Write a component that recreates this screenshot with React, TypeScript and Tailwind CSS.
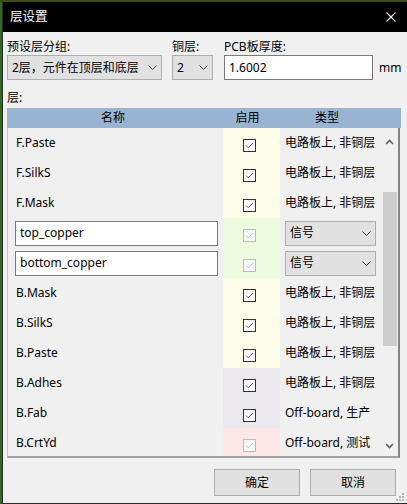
import React from "react";

type Row = {
  name: string;
  copper?: boolean;
  bg: string;
  type: string;
  locked?: boolean;
};

const rows: Row[] = [
  { name: "F.Paste", bg: "bg-[#fefdea]", type: "电路板上, 非铜层" },
  { name: "F.SilkS", bg: "bg-[#fefdea]", type: "电路板上, 非铜层" },
  { name: "F.Mask", bg: "bg-[#fefdea]", type: "电路板上, 非铜层" },
  { name: "top_copper", copper: true, bg: "bg-[#ecfadd]", type: "信号", locked: true },
  { name: "bottom_copper", copper: true, bg: "bg-[#ecfadd]", type: "信号", locked: true },
  { name: "B.Mask", bg: "bg-[#fefdea]", type: "电路板上, 非铜层" },
  { name: "B.SilkS", bg: "bg-[#fefdea]", type: "电路板上, 非铜层" },
  { name: "B.Paste", bg: "bg-[#fefdea]", type: "电路板上, 非铜层" },
  { name: "B.Adhes", bg: "bg-[#ebe9ed]", type: "电路板上, 非铜层" },
  { name: "B.Fab", bg: "bg-[#ebe9ed]", type: "Off-board, 生产" },
  { name: "B.CrtYd", bg: "bg-[#fde7e8]", type: "Off-board, 测试", locked: true },
];

const Chevron = () => (
  <svg width="9" height="5" viewBox="0 0 9 5" fill="none">
    <path d="M0.5 0.5 L4.5 4.5 L8.5 0.5" stroke="#404040" strokeWidth="1" />
  </svg>
);

const ScrollArrow = ({ down }: { down?: boolean }) => (
  <svg width="9" height="6" viewBox="0 0 9 6" fill="none">
    <path
      d={down ? "M1 1 L4.5 4.5 L8 1" : "M1 5 L4.5 1.5 L8 5"}
      stroke="#606060"
      strokeWidth="1.6"
    />
  </svg>
);

const Check = ({ locked }: { locked?: boolean }) => (
  <svg width="13" height="13" viewBox="0 0 13 13" fill="none">
    <rect
      x="0.5"
      y="0.5"
      width="12"
      height="12"
      fill={locked ? "#f8f8f8" : "#ffffff"}
      stroke={locked ? "#bcbcbc" : "#333333"}
    />
    <path
      d="M3 6.5 L5.3 8.8 L10 4"
      stroke={locked ? "#c4c4c4" : "#555555"}
      strokeWidth="1"
    />
  </svg>
);

const Combo = ({ text, className }: { text: string; className: string }) => (
  <div
    className={`flex items-center justify-between h-[25px] bg-[#e1e1e1] border border-[#adadad] pl-[4px] pr-[4px] ${className}`}
  >
    <span className="leading-none">{text}</span>
    <Chevron />
  </div>
);

export default function App() {
  return (
    <div className="w-[407px] h-[504px] overflow-hidden flex flex-col bg-[#1f3d16] text-[12px] text-black font-['Noto_Sans','Noto_Sans_CJK_SC',sans-serif]">
      <div className="h-[2px] bg-[#3c4a14]" />
      <div className="flex flex-1 min-h-0">
        <div className="w-[2px] bg-[#2f6a20]" />
        <div className="relative flex-1 flex flex-col bg-[#f0f0f0] border-l border-b border-[#2a2a2a]">
          {/* title bar */}
          <div className="h-[30px] bg-black flex items-center justify-between pl-[7px] pr-[11px] text-white">
            <span className="text-[12.5px]">层设置</span>
            <svg width="10" height="10" viewBox="0 0 10 10">
              <path d="M0.5 0.5 L9.5 9.5 M9.5 0.5 L0.5 9.5" stroke="#ffffff" strokeWidth="1.1" />
            </svg>
          </div>

          <div className="flex flex-col flex-1 pl-[4px] pt-[7px]">
            {/* top controls */}
            <div className="flex items-end">
              <div className="flex flex-col w-[155px] gap-[1px]">
                <span className="h-[15px] leading-[15px]">预设层分组:</span>
                <Combo text="2层，元件在顶层和底层" className="w-[155px]" />
              </div>
              <div className="flex flex-col w-[41px] ml-[10px] gap-[1px]">
                <span className="h-[15px] leading-[15px]">铜层:</span>
                <Combo text="2" className="w-[41px]" />
              </div>
              <div className="flex flex-col w-[149px] ml-[11px] gap-[1px]">
                <span className="h-[15px] leading-[15px]">PCB板厚度:</span>
                <div className="h-[25px] bg-white border border-[#7a7a7a] flex items-center pl-[4px]">
                  1.6002
                </div>
              </div>
              <span className="ml-[6px] h-[25px] leading-[25px]">mm</span>
            </div>

            <span className="mt-[10px] h-[15px] leading-[15px]">层:</span>

            {/* header */}
            <div className="mt-[3px] w-[394px] h-[20px] bg-[#99b4d1] flex items-center">
              <span className="w-[212px] text-center">名称</span>
              <span className="w-[57px] text-center">启用</span>
              <span className="w-[102px] text-center">类型</span>
            </div>

            {/* body */}
            <div className="w-[393px] h-[330px] flex border-l border-[#c8c8c8] border-r-2 border-b-2 border-r-[#838383] border-b-[#a0a0a0]">
              <div className="w-[373px] h-[328px] overflow-hidden flex flex-col">
                {rows.map((r) => (
                  <div key={r.name} className="flex h-[30px] shrink-0">
                    <div className="w-[215px] flex items-center">
                      {r.copper ? (
                        <div className="ml-[7px] w-[203px] h-[25px] bg-white border border-[#7a7a7a] flex items-center pl-[4px]">
                          {r.name}
                        </div>
                      ) : (
                        <span className="pl-[8px]">{r.name}</span>
                      )}
                    </div>
                    <div className={`w-[57px] flex items-center pl-[20px] ${r.bg}`}>
                      <div className="mt-[5px] flex">
                        <Check locked={r.locked} />
                      </div>
                    </div>
                    <div className="w-[101px] flex items-center">
                      {r.copper ? (
                        <Combo text={r.type} className="ml-[5px] w-[91px] pr-[3px]" />
                      ) : (
                        <span className="pl-[5px] whitespace-nowrap">{r.type}</span>
                      )}
                    </div>
                  </div>
                ))}
              </div>
              {/* scrollbar */}
              <div className="w-[17px] flex flex-col items-center">
                <div className="h-[28px] flex items-center justify-center">
                  <ScrollArrow />
                </div>
                <div className="h-[36px]" />
                <div className="w-[14px] h-[154px] bg-[#cdcdcd]" />
                <div className="flex-1" />
                <div className="h-[20px] flex items-center justify-center">
                  <ScrollArrow down />
                </div>
              </div>
            </div>

            {/* buttons */}
            <div className="mt-[11px] flex justify-end gap-[10px] pr-[11px]">
              <button className="w-[86px] h-[27px] bg-[#e1e1e1] border border-[#adadad]">确定</button>
              <button className="w-[86px] h-[27px] bg-[#e1e1e1] border border-[#adadad]">取消</button>
            </div>
          </div>

          {/* resize grip */}
          <svg className="absolute right-[2px] bottom-[1px]" width="9" height="9" viewBox="0 0 9 9">
            <rect x="6" y="0" width="2" height="2" fill="#b5b5b5" />
            <rect x="3" y="3" width="2" height="2" fill="#b5b5b5" />
            <rect x="6" y="3" width="2" height="2" fill="#b5b5b5" />
            <rect x="0" y="6" width="2" height="2" fill="#b5b5b5" />
            <rect x="3" y="6" width="2" height="2" fill="#b5b5b5" />
            <rect x="6" y="6" width="2" height="2" fill="#b5b5b5" />
          </svg>
        </div>
      </div>
    </div>
  );
}
